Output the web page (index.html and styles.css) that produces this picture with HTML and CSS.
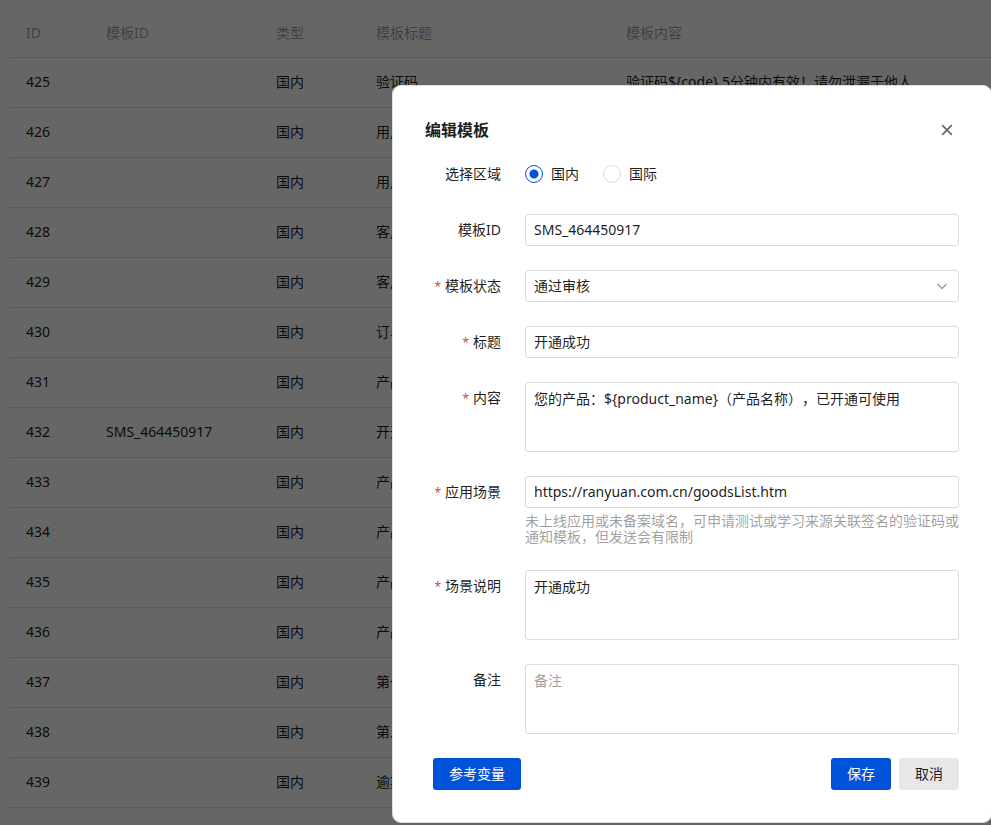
FILE: index.html
```html
<!DOCTYPE html>
<html lang="zh-CN">
  <head>
    <meta charset="UTF-8" />
    <meta name="viewport" content="width=device-width, initial-scale=1.0" />
    <title>短信模板</title>
    <link rel="stylesheet" href="styles.css">
  </head>
  <body>
    <!-- 模板列表 -->
    <div class="list">
      <table class="table">
        <colgroup>
          <col class="col-id" />
          <col class="col-code" />
          <col class="col-type" />
          <col class="col-title" />
          <col class="col-content" />
        </colgroup>
        <thead>
          <tr>
            <th>ID</th>
            <th>模板ID</th>
            <th>类型</th>
            <th>模板标题</th>
            <th>模板内容</th>
          </tr>
        </thead>
        <tbody>
          <tr><td>425</td><td></td><td>国内</td><td>验证码</td><td>验证码${code},5分钟内有效！请勿泄漏于他人</td></tr>
          <tr><td>426</td><td></td><td>国内</td><td>用户</td><td></td></tr>
          <tr><td>427</td><td></td><td>国内</td><td>用户</td><td></td></tr>
          <tr><td>428</td><td></td><td>国内</td><td>客户</td><td></td></tr>
          <tr><td>429</td><td></td><td>国内</td><td>客户</td><td></td></tr>
          <tr><td>430</td><td></td><td>国内</td><td>订单</td><td></td></tr>
          <tr><td>431</td><td></td><td>国内</td><td>产品</td><td></td></tr>
          <tr><td>432</td><td>SMS_464450917</td><td>国内</td><td>开通成功</td><td></td></tr>
          <tr><td>433</td><td></td><td>国内</td><td>产品</td><td></td></tr>
          <tr><td>434</td><td></td><td>国内</td><td>产品</td><td></td></tr>
          <tr><td>435</td><td></td><td>国内</td><td>产品</td><td></td></tr>
          <tr><td>436</td><td></td><td>国内</td><td>产品</td><td></td></tr>
          <tr><td>437</td><td></td><td>国内</td><td>第一</td><td></td></tr>
          <tr><td>438</td><td></td><td>国内</td><td>第二</td><td></td></tr>
          <tr><td>439</td><td></td><td>国内</td><td>逾期</td><td></td></tr>
        </tbody>
      </table>
    </div>

    <!-- 编辑弹窗 -->
    <div class="mask">
      <div class="dialog" role="dialog" aria-labelledby="dialog-title">
        <div class="dialog-header">
          <h2 id="dialog-title">编辑模板</h2>
          <button type="button" class="close" aria-label="关闭">
            <svg width="24" height="24" viewBox="0 0 24 24" fill="none" stroke="currentColor" stroke-width="1.7">
              <path d="M7.2 7.2l9.6 9.6M16.8 7.2l-9.6 9.6" />
            </svg>
          </button>
        </div>
        <form class="form" autocomplete="off">
          <div class="item" role="radiogroup" aria-labelledby="area-label">
            <span class="label" id="area-label">选择区域</span>
            <div class="control radios">
              <label class="radio"><input type="radio" name="area" value="1" checked />国内</label>
              <label class="radio"><input type="radio" name="area" value="2" />国际</label>
            </div>
          </div>
          <div class="item">
            <label class="label" for="code">模板ID</label>
            <div class="control">
              <input type="text" class="input" id="code" name="code" value="SMS_464450917" />
            </div>
          </div>
          <div class="item">
            <label class="label required" for="status">模板状态</label>
            <div class="control select">
              <select class="input" id="status" name="status">
                <option>通过审核</option>
              </select>
              <svg class="arrow" width="16" height="16" viewBox="0 0 16 16" fill="none" stroke="currentColor" stroke-width="1.3">
                <path d="M3.5 6L8 10.5L12.5 6" />
              </svg>
            </div>
          </div>
          <div class="item">
            <label class="label required" for="title">标题</label>
            <div class="control">
              <input type="text" class="input" id="title" name="title" value="开通成功" />
            </div>
          </div>
          <div class="item">
            <label class="label required" for="content">内容</label>
            <div class="control">
              <textarea class="input textarea" id="content" name="content">您的产品：${product_name}（产品名称），已开通可使用</textarea>
            </div>
          </div>
          <div class="item">
            <label class="label required" for="scene">应用场景</label>
            <div class="control">
              <input type="text" class="input" id="scene" name="scene" value="https://ranyuan.com.cn/goodsList.htm" />
              <p class="help">未上线应用或未备案域名，可申请测试或学习来源关联签名的验证码或通知模板，但发送会有限制</p>
            </div>
          </div>
          <div class="item">
            <label class="label required" for="explain">场景说明</label>
            <div class="control">
              <textarea class="input textarea" id="explain" name="explain">开通成功</textarea>
            </div>
          </div>
          <div class="item">
            <label class="label" for="remark">备注</label>
            <div class="control">
              <textarea class="input textarea" id="remark" name="remark" placeholder="备注"></textarea>
            </div>
          </div>
          <div class="footer">
            <button type="button" class="btn primary">参考变量</button>
            <div class="actions">
              <button type="submit" class="btn primary">保存</button>
              <button type="button" class="btn">取消</button>
            </div>
          </div>
        </form>
      </div>
    </div>
  </body>
</html>
```
FILE: styles.css
```css
* {
  margin: 0;
  padding: 0;
  box-sizing: border-box;
}

body {
  font: 14px/22px "Noto Sans", "Noto Sans CJK SC", sans-serif;
  color: rgba(0, 0, 0, 0.9);
  background: #fff;
  overflow: hidden;
}

input,
select,
textarea,
button {
  font: inherit;
  color: inherit;
  outline: none;
}

/* 列表 */
.list {
  padding: 8px 0 0 10px;
}

.table {
  width: 100%;
  table-layout: fixed;
  border-collapse: separate;
  border-spacing: 0;
}

.col-id {
  width: 80px;
}

.col-code {
  width: 170px;
}

.col-type {
  width: 100px;
}

.col-title {
  width: 250px;
}

th,
td {
  height: 50px;
  padding: 0 16px;
  text-align: left;
  font-weight: 400;
  white-space: nowrap;
  border-bottom: 1px solid #d9d9d9;
}

th {
  color: rgba(0, 0, 0, 0.4);
}

td {
  padding-bottom: 2px;
}

/* 弹窗 */
.mask {
  position: fixed;
  inset: 0;
  display: flex;
  justify-content: flex-end;
  align-items: flex-start;
  padding-top: 85px;
  background: rgba(0, 0, 0, 0.6);
  overflow: hidden;
}

.dialog {
  width: 600px;
  margin-right: -1px;
  padding: 32px;
  background: #fff;
  border: 1px solid #dcdcdc;
  border-radius: 9px;
}

.dialog-header {
  display: flex;
  justify-content: space-between;
  align-items: center;
  margin-bottom: 16px;
}

.dialog-header h2 {
  font-size: 16px;
  line-height: 24px;
  font-weight: 700;
}

.close {
  width: 24px;
  height: 24px;
  border: 0;
  background: none;
  color: rgba(0, 0, 0, 0.6);
  cursor: pointer;
}

.close svg {
  display: block;
}

/* 表单 */
.form {
  display: flex;
  flex-direction: column;
  gap: 24px;
}

.item {
  display: flex;
}

.label {
  width: 100px;
  padding-right: 24px;
  line-height: 32px;
  text-align: right;
}

.required::before {
  content: "*";
  margin-right: 4px;
  font-size: 12px;
  line-height: 1;
  color: #d54941;
}

.control {
  flex: 1;
  min-width: 0;
}

.radios {
  display: flex;
  align-items: center;
  gap: 24px;
  height: 32px;
}

.radio {
  display: flex;
  align-items: center;
  gap: 8px;
  cursor: pointer;
}

.radio input {
  appearance: none;
  width: 18px;
  height: 18px;
  border: 1px solid #dcdcdc;
  border-radius: 50%;
}

.radio input:checked {
  border-color: #0052d9;
  background: radial-gradient(circle, #0052d9 4px, #fff 5px);
}

.input {
  display: block;
  width: 100%;
  height: 32px;
  padding: 0 8px 2px;
  border: 1px solid #dcdcdc;
  border-radius: 3px;
  background: #fff;
}

.input:focus {
  border-color: #0052d9;
}

.textarea {
  height: 70px;
  padding: 5px 8px;
  resize: none;
  text-spacing-trim: space-all;
}

.textarea::placeholder {
  color: rgba(0, 0, 0, 0.4);
}

.select {
  position: relative;
}

.select .input {
  appearance: none;
  padding-bottom: 0;
}

.arrow {
  position: absolute;
  top: 8px;
  right: 9px;
  color: rgba(0, 0, 0, 0.4);
  pointer-events: none;
}

.help {
  padding: 5px 0 1px;
  line-height: 16px;
  color: rgba(0, 0, 0, 0.4);
}

.footer {
  display: flex;
  justify-content: space-between;
  padding-left: 8px;
}

.actions {
  display: flex;
  gap: 8px;
}

.btn {
  height: 32px;
  padding: 0 16px;
  border: 0;
  border-radius: 3px;
  background: #e7e7e7;
  cursor: pointer;
}

.primary {
  color: #fff;
  background: #0052d9;
}
```
